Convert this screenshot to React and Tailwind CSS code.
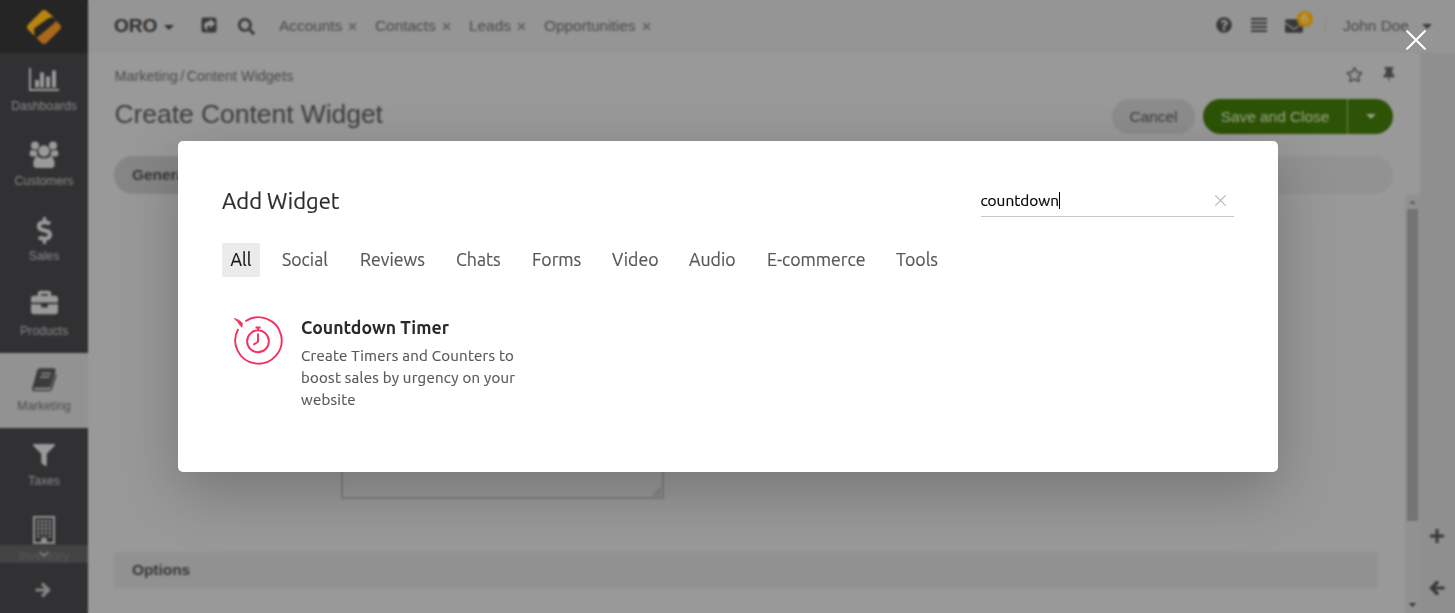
import {
  FaDollarSign, FaBriefcase, FaFilter, FaSearch,
  FaQuestionCircle, FaEnvelope, FaRegStar, FaPlus, FaTimes,
} from "react-icons/fa";

function BarChartIcon() {
  return (
    <svg width="32" height="26" viewBox="0 0 32 26" fill="currentColor">
      <path d="M1 1h2v21h28v2H1zM7 13h4v7.500H7zM12 5.500h4v15h-4zM18 9.500h4v11h-4zM24 3.500h4v17h-4z" />
    </svg>
  );
}

function GroupIcon() {
  return (
    <svg width="30" height="28" viewBox="0 0 30 28" fill="currentColor">
      <circle cx="6" cy="4.5" r="4" />
      <circle cx="24" cy="4.5" r="4" />
      <circle cx="15" cy="10" r="5.7" />
      <path d="M3 9c2 1 4 1 5 .3-.5 2.500 0 4.500 1.200 6.200H3.500C1.500 15.500.6 14.500.6 13c0-2 .6-4 2.400-4zM27 9c-2 1-4 1-5 .3.5 2.500 0 4.500-1.200 6.200h5.700c2 0 2.900-1 2.900-2.500 0-2-.6-4-2.400-4z" />
      <path d="M8.800 15.500c3.500 2.500 9 2.500 12.400 0 3 0 4.500 4 4.500 8 0 2.200-1.400 3.500-3.500 3.500H7.800c-2.100 0-3.500-1.300-3.500-3.500 0-4 1.500-8 4.500-8z" />
    </svg>
  );
}

function BookIcon() {
  return (
    <svg width="26" height="24" viewBox="0 0 26 24" fill="none" stroke="currentColor">
      <path d="M8 1h14.500c1 0 1.500.8 1.200 1.800L19 17.500c-.3 1-1 1.500-2 1.500H3.500c-2 0-2.500 3.500.5 3.500h14c1 0 1.800-.5 2.200-1.500L25 6.500" strokeWidth="1.700" />
      <path d="M8 .8h14.500c1 0 1.500.8 1.200 1.800L19 17.500c-.3 1-1 1.500-2 1.500H1.500L6 3C6.400 1.500 7 .8 8 .8z" fill="currentColor" stroke="none" />
      <path d="M10.500 5.500h9.500M9.300 9h9.500" stroke="#929292" strokeWidth="1.700" />
    </svg>
  );
}

function BuildingIcon() {
  return (
    <svg width="22" height="28" viewBox="0 0 22 28" fill="none" stroke="currentColor">
      <rect x="1" y="1" width="20" height="26" strokeWidth="2" />
      <path d="M5.200 4v19M9.100 4v16M12.900 4v16M16.800 4v19" strokeWidth="2.200" strokeDasharray="2.400 1.400" />
      <path d="M8 27v-4l1.500-1.500h3L14 23v4z" fill="currentColor" stroke="none" />
    </svg>
  );
}

function ShareIcon() {
  return (
    <svg width="16" height="16" viewBox="0 0 16 16">
      <rect x="0.500" y="0.500" width="15" height="15" rx="2.600" fill="#383838" />
      <path d="M9 1.800l5.200 4.700L9 11.200V8.600c-3 0-3.600 1.700-2.200 5.200C2 11 1.500 4.300 9 4.200z" fill="#9c9c9c" />
    </svg>
  );
}

function LinesIcon() {
  return (
    <svg className="mb-[2px] ml-[19px]" width="16" height="14" viewBox="0 0 16 14" fill="currentColor">
      <path d="M0 0h16v2H0zM0 4h16v2H0zM0 8h16v2H0zM0 12h16v2H0z" />
    </svg>
  );
}

function PinIcon() {
  return (
    <svg className="mt-[2px]" width="12" height="16" viewBox="0 0 12 16" fill="currentColor">
      <path d="M1.500 0h9v1.800H9.300v4.700c1.500.8 2.400 2 2.400 3.700H6.800L6 16l-.8-5.800H.3c0-1.700.9-2.900 2.400-3.700V1.800H1.500z" />
    </svg>
  );
}

function ArrowIcon({ flip }) {
  return (
    <svg className={flip ? "rotate-180" : ""} width="16" height="16" viewBox="0 0 16 16" fill="none" stroke="currentColor" strokeWidth="3.200">
      <path d="M.5 8H13M7 1.500L13.500 8 7 14.500" />
    </svg>
  );
}

function Logo() {
  return (
    <svg width="36" height="36" viewBox="0 0 36 36">
      <path d="M15.500 2.300Q18 0 20.500 2L28 8.500 8.500 27 2 20.500Q0 18 2.200 15.500z" fill="#b8860f" />
      <path d="M28.500 11L34 15.500Q36 18 34 20.500L20.500 34Q18 36 15.500 34L10.500 29z" fill="#a9681a" />
      <path d="M8 19.500L22 9.500 26.500 8 29.500 12 28 14.500 13.500 26.500 8.500 27z" fill="#252525" />
    </svg>
  );
}

function TimerIcon() {
  return (
    <svg className="mt-px ml-[-0.500px]" width="50" height="50" viewBox="0 0 50 50" fill="none" stroke="#f5305f" strokeWidth="1.900">
      <path d="M12.400 5.300A23.200 23.200 0 1 1 5.300 13" />
      <path d="M1.200 2.500C4 3 7.500 5 9.300 7.200L9 11.300C6.500 9.500 6.500 7 1.200 2.500z" fill="#f5305f" strokeWidth="0.800" />
      <circle cx="25" cy="25.300" r="10.900" />
      <path d="M22.500 11.500h5M25 11.500v3M25 17.500v8.300L20.300 28.700" />
    </svg>
  );
}

function Cross({ size, color, width }) {
  return (
    <svg width={size} height={size} viewBox="0 0 20 20" stroke={color} strokeWidth={width} fill="none">
      <path d="M0.500 0.500L19.500 19.500M19.500 0.500L0.500 19.500" />
    </svg>
  );
}

function Caret({ className }) {
  return (
    <svg className={className} width="10" height="5" viewBox="0 0 10 5" fill="currentColor">
      <path d="M0 0h10L5 5z" />
    </svg>
  );
}

const nav = [
  { label: "Dashboards", icon: <BarChartIcon /> },
  { label: "Customers", icon: <GroupIcon /> },
  { label: "Sales", icon: <FaDollarSign size={27} /> },
  { label: "Products", icon: <FaBriefcase size={27} className="mb-[5px]" /> },
  { label: "Marketing", icon: <BookIcon />, active: true },
  { label: "Taxes", icon: <FaFilter size={22} /> },
];

const pins = [
  { label: "Accounts", w: "w-[96px]" },
  { label: "Contacts", w: "w-[94px]" },
  { label: "Leads", w: "w-[75px]" },
  { label: "Opportunities", w: "w-[110px]" },
];

const tabs = [
  { label: "Social", w: "w-[78px]" },
  { label: "Reviews", w: "w-[96px]" },
  { label: "Chats", w: "w-[76px]" },
  { label: "Forms", w: "w-[80px]" },
  { label: "Video", w: "w-[77px]" },
  { label: "Audio", w: "w-[78px]" },
  { label: "E-commerce", w: "w-[129px]" },
  { label: "Tools", w: "w-[50px]" },
];

function Sidebar() {
  return (
    <aside className="flex h-full w-[88px] shrink-0 flex-col bg-[#313133]">
      <div className="flex h-[53px] items-center justify-center bg-[#252525]"><Logo /></div>
      {nav.map((n) => (
        <div key={n.label} className={n.active ? "flex h-[75px] flex-col items-center bg-[#929292] text-[#3b3b3b]" : "flex h-[75px] flex-col items-center text-[#9a9a9a]"}>
          <div className="mt-[12px] flex h-[30px] items-center">{n.icon}</div>
          <span className={n.active ? "mt-[3px] text-[12.200px] leading-[16px] text-[#505050]" : "mt-[3px] text-[12.200px] leading-[16px] text-[#858585]"}>{n.label}</span>
        </div>
      ))}
      <div className="flex h-[42px] justify-center overflow-hidden pt-[13px] text-[#929292]"><BuildingIcon /></div>
      <div className="relative flex h-[18px] items-center justify-center bg-[#434344] pt-[4px] text-[12.200px] text-[#575757]">
        <span>Inventory</span>
        <svg className="absolute top-[6px] left-[39px]" width="10" height="6" viewBox="0 0 10 6" fill="none" stroke="#858585" strokeWidth="1.500"><path d="M.8.800L5 5 9.200.800" /></svg>
      </div>
      <div className="flex h-[50px] items-center justify-center pt-[4px] pr-[2px] text-[#858585]"><ArrowIcon /></div>
    </aside>
  );
}

function TopBar() {
  return (
    <header className="flex h-[53px] shrink-0 items-center bg-[#959595] pb-px pl-[26px] text-[15.400px] text-[#4d4d4d]">
      <span className="w-[50px] text-[19px] font-bold text-[#303030]">ORO</span>
      <Caret className="mt-[3px] text-[#303030]" />
      <span className="mb-[2px] ml-[27px]"><ShareIcon /></span>
      <FaSearch size={17} className="ml-[21px] text-[#383838]" />
      <div className="ml-[24px] flex">
        {pins.map((p) => (
          <div key={p.label} className={`flex items-center gap-[5px] ${p.w}`}>
            <span>{p.label}</span>
            <FaTimes size={11} className="mt-px shrink-0 text-[#666]" />
          </div>
        ))}
      </div>
      <div className="ml-auto flex items-center text-[#383838]">
        <FaQuestionCircle size={16} className="mb-[2px]" />
        <LinesIcon />
        <div className="relative ml-[18px] w-[40px]">
          <FaEnvelope size={18} />
          <span className="absolute -top-[6px] left-[12px] flex size-[16px] items-center justify-center rounded-full bg-[#b97f04] text-[13.500px] text-[#b5ad9a]">6</span>
        </div>
        <span className="h-[15px] w-px bg-[#888]" />
        <span className="ml-[17px] w-[79px] text-[#4d4d4d]">John Doe</span>
        <Caret className="mt-px mr-[23px]" />
      </div>
    </header>
  );
}

function Page() {
  return (
    <div className="flex min-w-0 grow flex-col">
      <div className="flex h-[141px] shrink-0 justify-between pr-[27px] pl-[26.500px] text-[#4d4d4d]">
        <div>
          <div className="mt-[14px] flex gap-[2.500px] text-[14.400px] leading-[18px]">
            <span>Marketing</span><span>/</span><span>Content Widgets</span>
          </div>
          <h1 className="mt-[14px] text-[26.400px] leading-[30px] text-[#404040]">Create Content Widget</h1>
        </div>
        <div className="flex flex-col items-end">
          <div className="mt-[13px] mr-[-2px] flex h-[16px] items-center gap-[20px] text-[#444]">
            <FaRegStar size={17} />
            <PinIcon />
          </div>
          <div className="mt-[17px] flex h-[35px] items-center gap-[8px] text-[15.400px]">
            <span className="flex h-full w-[83px] items-center justify-center rounded-full bg-[#8c8c8c] text-[#3f3f3f]">Cancel</span>
            <span className="flex h-full w-[190px] rounded-full bg-[#2d5306] text-[#96a184]">
              <span className="flex w-[145px] items-center justify-center border-r border-[#6c8551]">Save and Close</span>
              <span className="flex grow items-center justify-center"><Caret /></span>
            </span>
          </div>
        </div>
      </div>
      <div className="mt-[-38px] mr-[27px] ml-[26px] flex h-[38px] shrink-0 items-center rounded-full bg-[#929292]">
        <span className="flex h-full w-[120px] items-center rounded-full bg-[#868686] pl-[18px] text-[15.400px] font-bold text-[#393939]">General</span>
      </div>
      <div className="flex min-h-0 grow">
        <div className="flex grow flex-col">
          <div className="ml-[253px] flex h-[305px] w-[323px] items-end justify-end border-2 border-[#808080] p-px">
            <svg width="9" height="9" viewBox="0 0 9 9" stroke="#555" fill="none"><path d="M1 9L9 1M5 9l4-4" /></svg>
          </div>
          <div className="mt-[53px] mr-[27px] ml-[26px] flex h-[36px] items-center rounded-[4px] bg-[#919191] pl-[18px] text-[15.400px] font-bold text-[#393939]">Options</div>
        </div>
        <div className="flex w-[15px] flex-col items-center justify-between bg-[#919191] pt-[6px] pb-[6px]">
          <svg width="7" height="4" viewBox="0 0 7 4" fill="#636363"><path d="M0 4h7L3.500 0z" /></svg>
          <div className="mt-[5px] mb-auto h-[312px] w-[11px] bg-[#747474]" />
          <svg width="7" height="4" viewBox="0 0 7 4" fill="#333"><path d="M0 0h7L3.500 4z" /></svg>
        </div>
      </div>
    </div>
  );
}

function Dialog() {
  return (
    <div className="h-[331px] w-[1100px] rounded-[5px] bg-white pt-[40px] pr-[44px] pl-[44px] font-['Ubuntu','Noto_Sans',sans-serif] shadow-[0_20px_60px_rgba(0,0,0,0.23)] [-webkit-text-stroke:0.200px]">
      <div className="flex h-[36px] items-start justify-between">
        <h2 className="pl-[0.500px] text-[22px] leading-[40px] text-[#2c2c2c]">Add Widget</h2>
        <div className="flex h-[36px] w-[253px] items-center border-b border-[#c8c8c8] pt-[4px] text-[15.400px] text-black">
          <span>countdown</span>
          <span className="h-[17px] w-px bg-black" />
          <span className="mr-[8px] ml-auto"><Cross size="11" color="#b5b5b5" width="2" /></span>
        </div>
      </div>
      <nav className="mt-[26px] flex h-[34px] items-center text-[17.700px] text-[#585858]">
        <span className="mr-[22.500px] flex h-full w-[38px] items-center justify-center rounded-[2px] bg-[#ebebeb] pl-px text-[#111]">All</span>
        {tabs.map((t) => (
          <div key={t.label} className={`shrink-0 whitespace-nowrap ${t.w}`}>{t.label}</div>
        ))}
      </nav>
      <div className="mt-[38px] ml-[12px] flex">
        <TimerIcon />
        <div className="ml-[18px] w-[225px]">
          <h3 className="text-[17.700px] leading-[26px] font-bold text-[#2a2a2a] [-webkit-text-stroke:0px]">Countdown Timer</h3>
          <p className="mt-[4px] text-[15px] leading-[22px] tracking-[0.260px] text-[#585858]">
            Create Timers and Counters to boost sales by urgency on your website
          </p>
        </div>
      </div>
    </div>
  );
}

export default function App() {
  return (
    <div className="relative flex h-[613px] w-[1455px] overflow-hidden bg-[#999] font-['Liberation_Sans',Arial,sans-serif]">
      <Sidebar />
      <div className="flex min-w-0 grow flex-col">
        <TopBar />
        <div className="flex min-h-0 grow">
          <Page />
          <div className="flex w-[35px] flex-col items-center justify-end gap-[36px] bg-[#8f8f8f] pr-px pb-[17px] text-[#383838]">
            <FaPlus size={16} />
            <ArrowIcon flip />
          </div>
        </div>
      </div>
      <div className="absolute inset-0 flex items-start justify-center pt-[141px] backdrop-blur-[1px]">
        <Dialog />
        <div className="absolute top-[30px] left-[1406px]"><Cross size="20" color="#fff" width="2" /></div>
      </div>
    </div>
  );
}
